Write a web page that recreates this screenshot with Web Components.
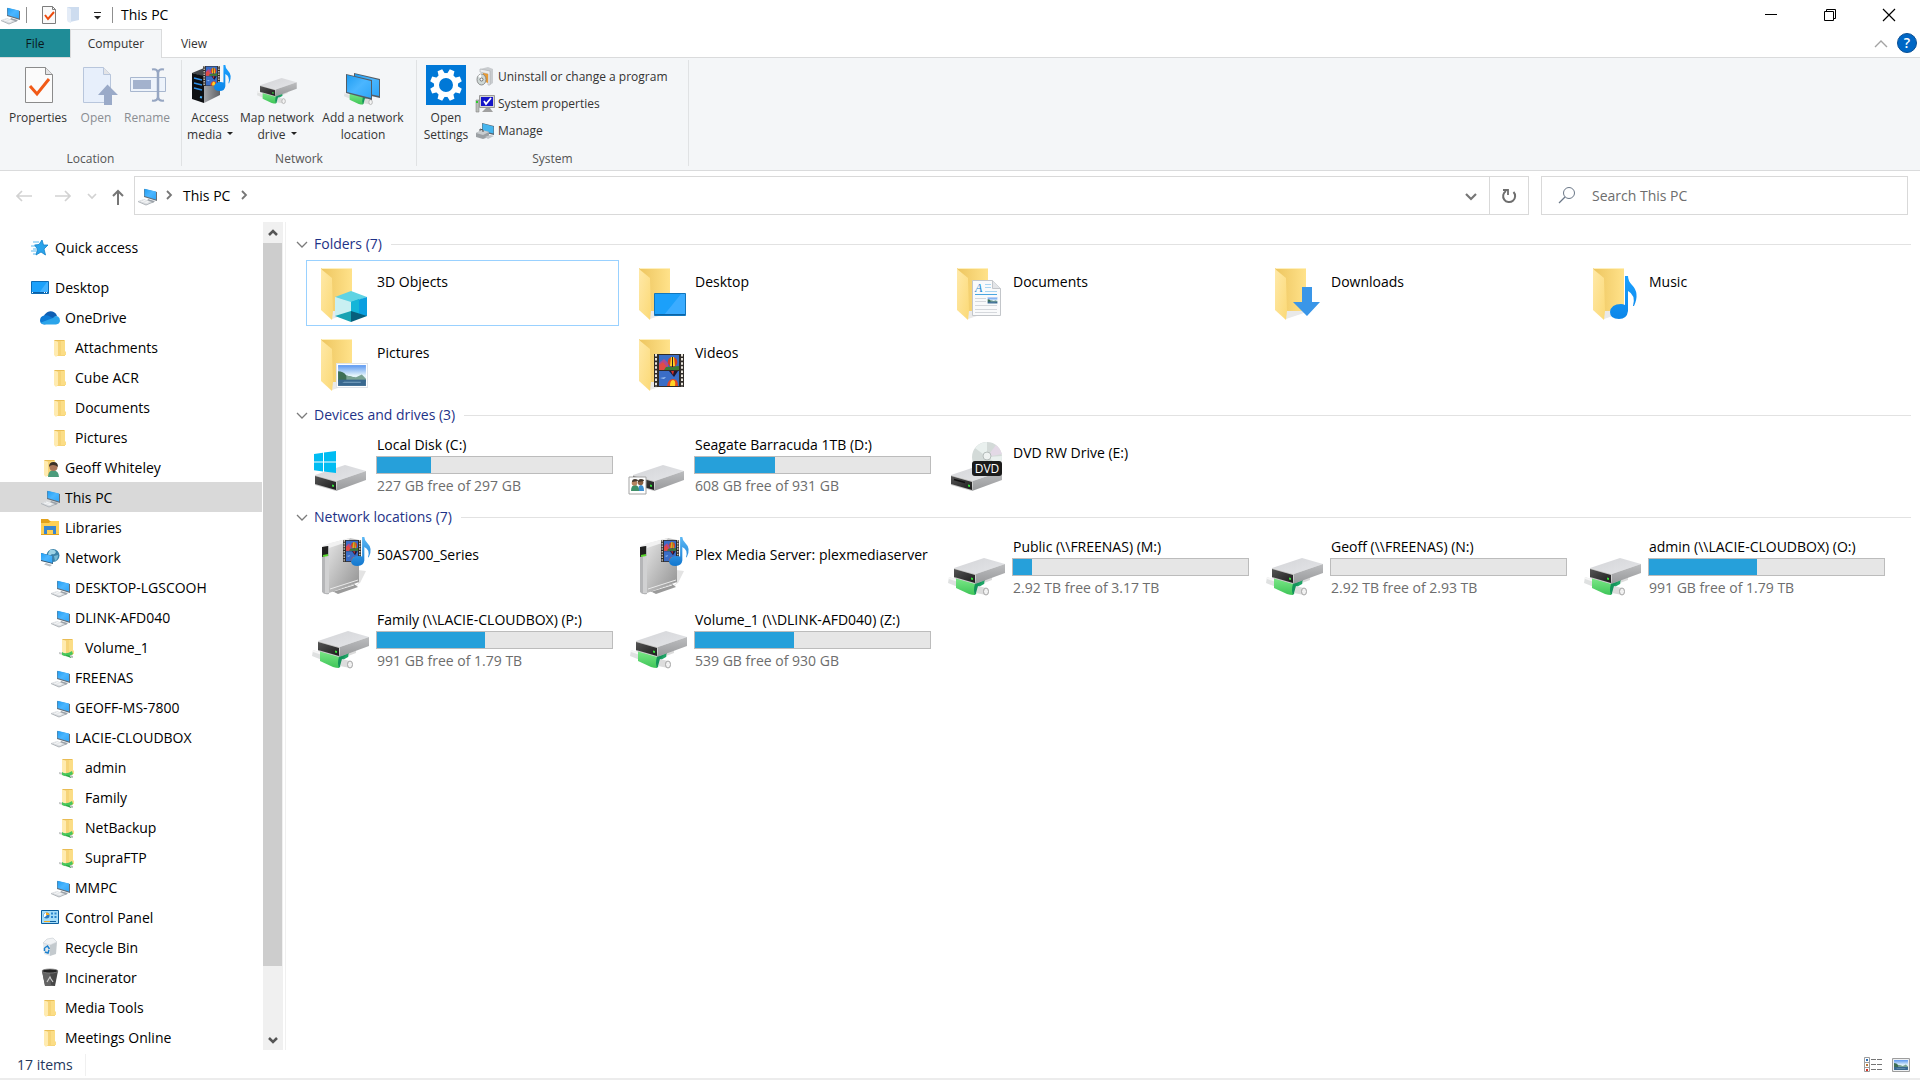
<!DOCTYPE html>
<html lang="en">
<head>
<meta charset="utf-8">
<title>This PC</title>
<style>
  html, body { height: 100%; margin: 0; }
  body {
    font: 14px/22px "Open Sans", "Noto Sans", sans-serif;
    color: #000;
    background: #fff;
    overflow: hidden;
  }
</style>
</head>
<body>
<file-explorer></file-explorer>

<script>
// ---- icon parts ----

const gradients = `
  <defs>
    <linearGradient id="fb" x1="0" x2="1"><stop offset="0" stop-color="#edc55f"/><stop offset="1" stop-color="#ffe28a"/></linearGradient>
    <linearGradient id="ff" x1="0" x2="1" y2="1"><stop offset="0" stop-color="#ffe9a8"/><stop offset="1" stop-color="#fbd976"/></linearGradient>
    <linearGradient id="top" x1="0" x2="1" y2="1"><stop offset="0" stop-color="#d4d5d8"/><stop offset="1" stop-color="#e4e5e8"/></linearGradient>
    <linearGradient id="side" x2="0" y2="1"><stop offset="0" stop-color="#bcbdbf"/><stop offset="1" stop-color="#98999b"/></linearGradient>
    <linearGradient id="dark" x2="1" y2="1"><stop offset="0" stop-color="#555"/><stop offset="1" stop-color="#1c1c1c"/></linearGradient>
    <linearGradient id="green" x2="0" y2="1"><stop offset="0" stop-color="#7be887"/><stop offset="1" stop-color="#3fc558"/></linearGradient>
    <linearGradient id="scr" x2="1" y2="1"><stop offset="0" stop-color="#1f9df2"/><stop offset=".5" stop-color="#4bb6ff"/><stop offset="1" stop-color="#2ea5f8"/></linearGradient>
    <linearGradient id="note" x2="0" y2="1"><stop offset="0" stop-color="#1aa0ff"/><stop offset="1" stop-color="#0c86e8"/></linearGradient>
    <linearGradient id="note2" x2="0" y2="1"><stop offset="0" stop-color="#5bb8f5"/><stop offset="1" stop-color="#1277cf"/></linearGradient>
    <linearGradient id="sky" x2="0" y2="1"><stop offset="0" stop-color="#5b97f0"/><stop offset=".5" stop-color="#e4f4fb"/><stop offset="1" stop-color="#cfe6f0"/></linearGradient>
    <linearGradient id="case" x2="1" y2="1"><stop offset="0" stop-color="#e6e6e6"/><stop offset="1" stop-color="#909090"/></linearGradient>
    <linearGradient id="srv" x2="1" y2="0"><stop offset="0" stop-color="#a4a6aa"/><stop offset="1" stop-color="#5f6165"/></linearGradient>
  </defs>`;

const bigFolder = `
  <path d="M18 56l21-7v-2H18z" fill="#e9e9e9"/>
  <path d="M7 5h31v43H17z" fill="url(#fb)"/>
  <path d="M7 5h31v1H8z" fill="#fff0bd"/>
  <path d="M7 6l11 9 1 33-1 9L7 47z" fill="url(#ff)"/>`;

const smallFolder = `
  <path d="M5 2h9v13h1v3H6z" fill="#f6d478"/>
  <path d="M11 2h4v11l1 1v3h-5z" fill="#fbdd86"/>
  <path d="M4 2l4 2v13l-2 2-2-2z" fill="#ffebb0"/>
  <path d="M4 2h10v1H5z" fill="#e9bd55"/>`;

// A drive box whose front face is dark with a green light.
const drive = (x, y, k = 1, slot = '') => `<g transform="translate(${x} ${y}) scale(${k})">
  <path d="M0 10L30 0l21 6-29 10z" fill="url(#top)"/>
  <path d="M22 16L51 6v9L21 26z" fill="url(#side)"/>
  <path d="M0 10l22 6-1 10-21-6z" fill="#c9c9c9"/>
  <path d="M0 11l21 6v8L0 19z" fill="url(#dark)"/>${slot}
  <path d="M17 19.500l2 .5v2l-2-.5z" fill="#35e03a"/>
</g>`;

const pipe = (x, y, k = 1) => `<g transform="translate(${x} ${y}) scale(${k})">
  <path d="M26 6l6-1 7-4-3 6-7 4z" fill="#1fa566"/>
  <path d="M38 -1l6-1v5l-8 3z" fill="#dcdcdc"/>
  <path d="M1 0l9 3v7L0 6z" fill="#dfe1e1"/>
  <path d="M1 0l9 3v2L1 2z" fill="#f6f6f6"/>
  <path d="M8 1l20 6-1 11q-3 0-6-1L8 11z" fill="url(#green)"/>
  <path d="M27 7l7-2q-5 4-4 9l-3 4q-2-5 0-11z" fill="#13935a"/>
  <path d="M30 9l8 2v7l-10-2z" fill="#dcdcdc"/>
  <ellipse cx="38" cy="14.500" rx="2.500" ry="3.500" fill="#f2f2f2" stroke="#a5a5a5"/>
</g>`;

const film = (x, y, w, h) => `<svg x="${x}" y="${y}" width="${w}" height="${h}" viewBox="0 0 30 33" preserveAspectRatio="none">
  <path d="M0 0h30v33H0z" fill="#2f2b28"/>
  <path d="M5 1h20v15H5zM5 17h20v15H5z" fill="#3a6dc6"/>
  <path d="M5 9l5-4 4 4v7H5z" fill="#b04a8e"/>
  <path d="M5 11l4-3 3 4v4H5z" fill="#e14b45"/>
  <path d="M12 13l13-1v4H10z" fill="#3c7d33"/>
  <circle cx="18.500" cy="8" r="4.800" fill="#d5401e"/><path d="M17 3h3l1 9h-5z" fill="#ffd527"/><path d="M18 3h1v10h-1z" fill="#222"/>
  <path d="M15 17h9l-4 6z" fill="#1d1630"/><path d="M17 17h3l-1 4z" fill="#d8342c"/>
  <path d="M6 24l6-1-2 2z" fill="#9ec3f2"/>
  <path d="M13 32q1-7 6-7t5 7z" fill="#e24a22"/><path d="M16 32q0-6 3-6t2 6z" fill="#ffd527"/>
  <path d="M2 0v33M28 0v33" stroke="#e9e5dc" stroke-width="2" stroke-dasharray="2.500 1.600"/>
</svg>`;

const note = (x, y, w, h, fill = 'note') => `<svg x="${x}" y="${y}" width="${w}" height="${h}" viewBox="0 0 27 43" preserveAspectRatio="none">
  <path d="M15 0h3q0 5 4 9 8 8 2 21h-1q3-11-5-15v20q-1 8-9 8-9 0-9-7 1-8 11-8 2 0 4 1z" fill="url(#${fill})"/>
</svg>`;

const landscape = (x, y, w, h) => `<svg x="${x}" y="${y}" width="${w}" height="${h}" viewBox="0 0 31 24" preserveAspectRatio="none">
  <path d="M0 0h31v24H0z" fill="#dfe3e8"/><path d="M1 1h29v22H1z" fill="#fff"/>
  <path d="M2 2h27v20H2z" fill="url(#sky)"/>
  <path d="M2 8q5 0 8 4l8 2 11 2v2H2z" fill="#3d6f55"/>
  <path d="M10 12l9 2 6-3 4 4v2H10z" fill="#7aa394"/>
  <path d="M2 16h27v6H2z" fill="#39688f"/><path d="M8 18h16v1H6z" fill="#7ea6c4"/>
</svg>`;

const people = `
  <path d="M0 0h17v17H0z" fill="#fff" stroke="#a3a3a3"/>
  <path d="M9 14q0-6 3-6t3 6z" fill="#3d8fd0"/><circle cx="11.500" cy="5.500" r="2.800" fill="#8a6043"/><path d="M9 5q0-3 3-3t3 2z" fill="#41362c"/>
  <path d="M2 14q0-6 4-6t4 6z" fill="#3f9067"/><circle cx="5.500" cy="6" r="2.800" fill="#b78460"/><path d="M3 5q0-3 3-3t3 2z" fill="#41362c"/>`;

const pc = `
  <path d="M7 3l13 3v9L7 11z" fill="#666f78"/>
  <path d="M7.500 2.800L19 5.500v8L7.500 10z" fill="url(#scr)"/>
  <path d="M11 13l3 1 4 1-2 2-6-2z" fill="#9aa1a8"/>
  <path d="M1 15l6-2 8 3-6 3z" fill="#dadde0"/>
  <path d="M1 15.500l8 3.500 6-2.500" fill="none" stroke="#b0b5ba"/>
  <path d="M4 15l7 2M6 14l6 2" stroke="#fff" stroke-width=".7"/>`;

const sheet = (fill, line) => `
  <path d="M7.500 2.500h20l7 7v28h-27z" fill="${fill}" stroke="${line}"/>
  <path d="M27.500 2.500v7h7" fill="#e4e4e6" stroke="${line}"/>`;

const netFolder = `<g transform="translate(-2 0)"><g transform="translate(0 -1)">${smallFolder}</g>
  <path d="M1 14l4 1v2l-4-1z" fill="#c6c8c8"/><path d="M4 14q4 3 10-1l1 3q-5 4-11 1z" fill="#48c65c"/>
  <path d="M8 17l6 1-1 2-5-2z" fill="#2ea748"/><path d="M12 17l3 1v2l-3-1z" fill="#b9bcbc"/></g>`;

const icons = {
  // navigation tree, 20px
  pc: [20, pc],
  folder: [20, smallFolder],
  netfolder: [20, netFolder],
  star: [20, `
    <path d="M12 2l1.500 5H18l-4 4 1.500 6-4.500-3-5 3 1.500-6-3-4 4.500-.5z" fill="#2aa3ea" stroke="#1282c9" stroke-width=".8"/>
    <path d="M3 4h6M1 8h4M3 11h4M1 13h5M3 16h3" stroke="#5db9ee"/>`],
  desktop: [20, `<path d="M1.500 3.500h17v12h-17z" fill="#1ba1fb" stroke="#0d6cb5"/><path d="M9 15L17 4h1v11z" fill="#42b2ff"/>
    <path d="M2 14.500h16" stroke="#0a5ea5"/><path d="M2 14.500h1M14 14.500h1M16 14.500h1" stroke="#fff"/>`],
  onedrive: [20, `
    <path d="M4 8q1-3 5-4.500 5-1 8 4l-5 4-9 3z" fill="#0f5fb3"/>
    <path d="M4 7.500q3-1 6 1l4 2-9 6q-5 0-5-4t4-5z" fill="#0d7ad4"/>
    <path d="M13 10q2-3 5-1.500 2 1 2 4.500-.5 3-4 3.500H5q-3 0-4-2z" fill="#2ba4ea"/>`],
  user: [20, `${smallFolder}
    <path d="M8 19q0-6 5-7 6 1 6 7z" fill="#4c9c7c"/><circle cx="13.500" cy="9" r="4" fill="#a9765a"/>
    <path d="M9 9q0-5 4.500-5T18 9q-2-2-5-2t-4 2z" fill="#3a3028"/>`],
  libraries: [20, `<path d="M1 1h7l2 2h9v14H1z" fill="#e3a11a"/><path d="M1 5l8 0 2-2h8v13H1z" fill="#ffd055"/>
    <path d="M4 8h12v8h-3v-4H7v4H4z" fill="#3a86cf"/>`],
  network: [20, `
    <circle cx="13" cy="7.500" r="6.500" fill="#3b84ab"/><path d="M10 2q5-1 6 2-1 3-4 2-3 2-2 5l-2-5z" fill="#9dd3e6"/><path d="M14 8l4-1q0 4-3 6z" fill="#76b9d4"/>
    <path d="M1 5l12 3v8L1 13z" fill="#37566e"/><path d="M1 5l11.500 3v7L1 12z" fill="url(#scr)"/>
    <path d="M6 15l6 2-2 1.500-6-2z" fill="#b9bfc4"/>`],
  control: [20, `<path d="M1.500 2.500h17v13h-17z" fill="#a4dcf8" stroke="#0c5f9f"/>
    <circle cx="6.500" cy="7.500" r="3" fill="#2878c0"/><path d="M6.500 7.500V4.500a3 3 0 0 0-2 5z" fill="#fff"/><path d="M6 4.500a3 3 0 0 1 3.500 2.500H6z" fill="#f5a81c"/>
    <path d="M11 4.500h2v2h-2zM14.500 4.500h2v2h-2zM11 8h2v2h-2zM14.500 8h2v2h-2z" fill="#2b85cc"/>
    <path d="M4 13.500h6" stroke="#f5a81c"/><path d="M10 13.500h6" stroke="#0c5f9f"/>`],
  recycle: [20, `<path d="M3 5l7 2v11l-6-2z" fill="#e3e7ea"/><path d="M10 7l7-3-1 12-6 2z" fill="#c4cace"/>
    <path d="M3 5l4-4 6-1 4 4-7 3z" fill="#f0f2f4" stroke="#c8cdd1" stroke-width=".6"/>
    <path d="M4.500 10l3-2 2 3M9 12l-1 3-3-1M4.500 13v-3" fill="none" stroke="#1b80cf" stroke-width="1.500"/>`],
  incinerator: [20, `<path d="M2 3h16l-3 15-10-.5z" fill="#474747"/><path d="M2 3l8 1 1 14H5z" fill="#636363"/>
    <ellipse cx="10" cy="3" rx="8" ry="2" fill="#222" stroke="#858585" stroke-width=".8"/>
    <path d="M7 14l3-5 1 2 2 3" fill="none" stroke="#ccc" stroke-width="1.200"/>`],
  paper: [20, `<path d="M3.500 1.500h10l3 3v14h-13z" fill="#fafafa" stroke="#7d7d7d"/><path d="M13.500 1.500v3h3" fill="none" stroke="#7d7d7d"/>
    <path d="M6 10l3 4 6-7" fill="none" stroke="#ed4a0c" stroke-width="2"/>`],
  palefolder: [20, `<path d="M4 2h12v13l-9 2z" fill="#cddcef"/><path d="M4 2l4 2v14l-3-1-1-2z" fill="#e4ecf7"/>`],

  // ribbon, 40px
  properties: [40, `${sheet('#fbfbfb', '#8b8b8b')}<path d="M12 21l7 8 12-15" fill="none" stroke="#f15a17" stroke-width="3"/>`],
  open: [40, `${sheet('#e7effb', '#b8c6dc')}<path d="M31.500 19.500L42 30h-6v10h-8V30h-6z" fill="#9aaac8"/>`],
  rename: [40, `<path d="M3.500 12.500h35v14h-35z" fill="#edf3fb" stroke="#a8b7cf"/><path d="M6 15h18v9H6z" fill="#a3b2cd"/>
    <path d="M31 6v29" stroke="#96a6c2" stroke-width="2.500"/><path d="M25 4.500q5-1 6 3 1-4 6-3M25 35.500q5 1 6-3 1 4 6 3" fill="none" stroke="#96a6c2" stroke-width="2"/>`],
  media: [40, `<path d="M2 8l12-5 16 3-15 6z" fill="#43464a"/><path d="M14 11l16-5v24l-16 8z" fill="url(#srv)"/><path d="M2 8l12 3v27L2 34z" fill="#0e1013"/>
    <path d="M4 13l8 2M4 18l8 2M4 23l8 2" stroke="#2e8fe8" stroke-width="1.500"/><path d="M10 32l2 .5" stroke="#49b4ff" stroke-width="2"/>
    ${film(13, 1, 17, 20)}${note(24, 0, 17, 26)}`],
  mapdrive: [40, `${pipe(0, 26, .7)}${drive(3, 13, .72)}`],
  addnet: [40, `${pipe(1, 27, .7)}
    <path d="M11 8l26 6v19l-26-6z" fill="#545d66"/><path d="M12 9l24 6v16l-24-5z" fill="url(#scr)"/>
    <path d="M3 9l26 6v20L3 28z" fill="#545d66"/><path d="M4 10l24 6v17L4 27z" fill="url(#scr)"/>`],
  settings: [40, `<path d="M0 0h40v40H0z" fill="#0078d7"/>
    <circle cx="20" cy="20" r="9.500" fill="none" stroke="#fff" stroke-width="5"/>
    <g fill="#fff">${[0, 45, 90, 135, 180, 225, 270, 315].map(a =>
      `<path d="M16.500 10l1-6h5l1 6z" transform="rotate(${a + 22.5} 20 20)"/>`).join('')}</g>`],
  uninstall: [20, `<path d="M5 2l8-2 5 2v14l-3 2z" fill="#c9cccf"/><path d="M5 2l10 2v14l-2 0V7L5 5z" fill="#ececee" stroke="#a9acaf" stroke-width=".6"/>
    <path d="M8 6l5 1v9l-5-2z" fill="#e79a35"/><ellipse cx="6.500" cy="12.500" rx="4.500" ry="5.500" fill="#cfd8d6" stroke="#777" stroke-width=".8"/>
    <path d="M6.500 12.500L3 9l3-2z" fill="#fff"/><circle cx="6.500" cy="12.500" r="1.500" fill="#fff" stroke="#555" stroke-width=".8"/>`],
  sysprops: [20, `<path d="M1 6h3v12H1z" fill="#b9bdb8" stroke="#888" stroke-width=".6"/><path d="M1 7h2v2H1z" fill="#2bd02b"/>
    <path d="M4.500 1.500h15v12h-15z" fill="#d5d5d0" stroke="#999"/><path d="M6 3h12v9H6z" fill="#1414c8"/><path d="M9 7l2 3 5-6" fill="none" stroke="#fff" stroke-width="1.800"/>
    <path d="M11 14h4l3 4H7z" fill="#a0a0a0"/>`],
  manage: [20, `<path d="M7 2l12 3v9L7 11z" fill="#59646e"/><path d="M7.500 2.500L18.500 5.500v7L7.500 10z" fill="#45b5ee"/>
    <path d="M1 12l6-3 7 2v5l-6 2-7-2z" fill="#9ba0a4"/><path d="M1 12l6-3 7 2-6 3z" fill="#c9cdd0"/><path d="M5 10V8l3 1v2" fill="none" stroke="#555"/><path d="M10 16l5-2 4 1-6 3z" fill="#c2c6ca"/>`],

  // tiles, 60px
  objects: [60, `${bigFolder}
    <path d="M37 28l16 6-16 6-16-6z" fill="#5fd3e3"/><path d="M21 34l16 5v15l-16-1z" fill="#c9f0f2"/><path d="M53 34l-16 5v15l16-1z" fill="#0a9fe0"/>
    <path d="M37 39l8-3v16l-8 2z" fill="#14b5d8"/><path d="M21 53l16-5v11z" fill="#17a3b3"/><path d="M53 53l-16-5v11z" fill="#075f7c"/>`],
  desk: [60, `${bigFolder}<path d="M22.500 30.500h31v22h-31z" fill="#1ba0fa" stroke="#1176bd"/><path d="M32 52L49 31h4v21z" fill="#3bacff"/><path d="M23 51h30v1H23z" fill="#0b63a5"/>`],
  docs: [60, `${bigFolder}<path d="M22.500 17.500h20l8 8v27h-28z" fill="#f9fafb" stroke="#c3c6ca"/><path d="M42.500 17.500v8h8" fill="#e3e5e8" stroke="#c3c6ca"/>
    <text x="25" y="29" font-family="Liberation Serif" font-style="italic" font-size="12" fill="#1c86cf">A</text>
    <path d="M35 21.500h6M35 24.500h6M35 28.500h12" stroke="#a9d5f1"/><path d="M25 31.500h22" stroke="#4aa6e0"/>
    <path d="M25 35.500h11M25 38.500h11M25 42.500h22M25 46.500h22M25 49.500h22" stroke="#d5d8dc"/>
    ${landscape(37, 34, 11, 7)}`],
  downloads: [60, `${bigFolder}<path d="M34 24h10v15h8L39 53 25 39h9z" fill="#3a96e8"/>`],
  music: [60, `${bigFolder}${note(24, 13, 27, 43)}`],
  pictures: [60, `${bigFolder}${landscape(22, 29, 32, 25)}`],
  videos: [60, `${bigFolder}${film(22, 20, 30, 33)}`],
  localdisk: [60, `${drive(1, 31)}<path d="M0 20l9-1.300v8.800H0zM10 18.600L22 17v10.500H10zM0 28.500h9v9l-9-1.300zM10 28.500h12V39l-12-1.500z" fill="#00bcf2"/>`],
  shareddisk: [60, `${drive(1, 31)}<g transform="translate(-3 43)">${people}</g>`],
  dvd: [60, `${drive(1, 31, 1, '<path d="M3 14.500l11 3" stroke="#111" stroke-width="1.500"/>')}
    <circle cx="37" cy="23" r="15" fill="#d3dad8"/><path d="M37 23L25 14q5-6 12-6zM37 23l15-1q0 6-3 9z" fill="#e9f0ee"/><path d="M37 23l9-12q4 3 6 9z" fill="#e3d9e6"/>
    <circle cx="37" cy="22" r="4" fill="#eef2f1" stroke="#b5bdbb"/>
    <rect x="22" y="27" width="30" height="15" rx="3" fill="#1b1b1b"/>
    <text x="37" y="39" text-anchor="middle" font-family="Open Sans" font-size="12" fill="#fff">DVD</text>`],
  server: [60, `<path d="M24 57l22-10 6-12-8-1v15z" fill="#e3e3e3"/><path d="M18 55l22-7 4 3-20 7z" fill="#9b9b9b"/><path d="M20 55l20-6" stroke="#eee"/>
    <path d="M14 8l22-6 9 2v42L15 57z" fill="url(#case)"/><path d="M8 10l8-3 20-5-3 4-18 6z" fill="#f1f1f1"/>
    <path d="M8 11l7-1v48q-5 1-7-2z" fill="#b5b6b8"/><path d="M10 20l2 0v37M14 20v37" stroke="#ececec" fill="none"/><path d="M8 11l6-1v9l-6 2z" fill="#202020"/><path d="M9 20l5-1" stroke="#57d62b" stroke-width="2"/>
    <path d="M16 53l28-9" stroke="#e9e9e9"/>
    ${film(29, 4, 18, 22)}${note(37, 1, 20, 29, 'note2')}`],
  netdrive: [60, `${pipe(-2, 41)}${drive(4, 22)}`],

  // status bar
  details: [20, `<path d="M1.500 2.500h5v14h-5z" fill="#fff" stroke="#9d9d9d"/><path d="M1 7.500h6M1 12.500h6" stroke="#9d9d9d"/>
    <path d="M3 4h2v2H3z" fill="#2a6fb7"/><path d="M3 9h2v2H3z" fill="#b77a3a"/><path d="M3 14h2v2H3z" fill="#d42d20"/>
    <path d="M8 4.500h5M14 4.500h5M8 9.500h5M14 9.500h5M8 14.500h5M14 14.500h5" stroke="#757575"/>`],
  thumbs: [20, `<path d="M1.500 3.500h17v13h-17z" fill="#fff" stroke="#9d9d9d"/>${landscape(2, 4, 16, 12)}`],

  // glyphs
  back: [20, '<path d="M18 10H3M8 5l-5 5 5 5" fill="none" stroke="#d2d2d2" stroke-width="1.700"/>'],
  forward: [20, '<path d="M2 10h15M12 5l5 5-5 5" fill="none" stroke="#d2d2d2" stroke-width="1.700"/>'],
  recent: [20, '<path d="M6 8l4 4 4-4" fill="none" stroke="#d2d2d2" stroke-width="1.700"/>'],
  up: [20, '<path d="M10 19V5M5 10l5-5 5 5" fill="none" stroke="#767676" stroke-width="2"/>'],
  right: [20, '<path d="M8 5l4 4-4 4" fill="none" stroke="#767676" stroke-width="1.800"/>'],
  down: [20, '<path d="M5 8l5 5 5-5" fill="none" stroke="#767676" stroke-width="2.200"/>'],
  refresh: [20, '<path d="M7 5a6 6 0 1 0 7.500 1" fill="none" stroke="#6e6e6e" stroke-width="2"/><path d="M4 4h5v5" fill="none" stroke="#6e6e6e" stroke-width="1.800"/>'],
  search: [20, '<circle cx="12" cy="7" r="5.500" fill="none" stroke="#6a7787"/><path d="M8 11l-6 6" stroke="#6a7787" stroke-width="1.200"/>'],
  group: [20, '<path d="M5 8l5 5 5-5" fill="none" stroke="#7b7b7b" stroke-width="1.300"/>'],
  scrollup: [20, '<path d="M6 12l4-4 4 4" fill="none" stroke="#555" stroke-width="2.500"/>'],
  scrolldown: [20, '<path d="M6 8l4 4 4-4" fill="none" stroke="#555" stroke-width="2.500"/>'],
  collapse: [20, '<path d="M4 13l6-6 6 6" fill="none" stroke="#a3a3a3" stroke-width="1.400"/>'],
  customize: [20, '<path d="M7 7.500h7" stroke="#222"/><path d="M7 11h7l-3.500 3.500z" fill="#222"/>'],
  minimize: [20, '<path d="M4 9.500h12" stroke="#000"/>'],
  restore: [20, '<path d="M4.500 6.500h9v9h-9zM6.500 6v-1.500h9v9H14" fill="none" stroke="#000"/>'],
  close: [20, '<path d="M4 4l12 12M16 4L4 16" stroke="#000" stroke-width="1.200"/>'],
};

const buttonReset = `
  button { font: inherit; color: inherit; background: none; border: 0; padding: 0; margin: 0; }
  a { color: inherit; text-decoration: none; }
`;

function define(name, render) {
  customElements.define(name, class extends HTMLElement {
    constructor() {
      super();
      this.attachShadow({ mode: 'open' });
    }

    connectedCallback() {
      this.shadowRoot.innerHTML = render(this);
    }
  });
}

define('ui-icon', (el) => {
  const [size, body] = icons[el.getAttribute('name')];
  return `
    <style>
      :host { display: block; flex: none; width: ${size}px; height: ${size}px; }
      svg { display: block; overflow: visible; }
    </style>
    <svg width="${size}" height="${size}" viewBox="0 0 ${size} ${size}" aria-hidden="true">${gradients}${body}</svg>`;
});

// ---- title bar ----

define('title-bar', () => `
  <style>
    ${buttonReset}
    :host { display: flex; align-items: center; height: 29px; }
    .sep { width: 1px; height: 16px; background: #8f8f8f; }
    .tools { display: flex; margin: 0 5px 0 12px; gap: 4px; }
    h1 { flex: 1; margin: 0 0 0 8px; font-size: 14px; font-weight: 400; }
    .win { display: flex; justify-content: center; width: 59px; }
    .win:last-child { margin-right: 2px; }
    .first { margin-right: 6px; }
  </style>
  <ui-icon class="first" name="pc"></ui-icon>
  <span class="sep"></span>
  <div class="tools">
    <button aria-label="Properties"><ui-icon name="paper"></ui-icon></button>
    <button aria-label="New folder"><ui-icon name="palefolder"></ui-icon></button>
    <button aria-label="Customize"><ui-icon name="customize"></ui-icon></button>
  </div>
  <span class="sep"></span>
  <h1>This PC</h1>
  <button class="win" aria-label="Minimize"><ui-icon name="minimize"></ui-icon></button>
  <button class="win" aria-label="Restore"><ui-icon name="restore"></ui-icon></button>
  <button class="win" aria-label="Close"><ui-icon name="close"></ui-icon></button>`);

// ---- ribbon ----

define('ribbon-tabs', () => `
  <style>
    ${buttonReset}
    :host { display: flex; align-items: stretch; height: 28px; font-size: 12px; color: #333; border-bottom: 1px solid #dadbdc; }
    button { padding-top: 1px; }
    .file { width: 70px; background: #1f8c97; color: #0a1a1c; }
    .tab { width: 92px; box-sizing: border-box; }
    .tab.on { background: #f4f6f8; border: 1px solid #dadbdc; border-bottom: 0; margin-bottom: -1px; padding: 0; }
    .view { width: 64px; }
    .right { display: flex; align-items: center; gap: 6px; margin-left: auto; padding-right: 3px; }
    .help { width: 20px; height: 20px; padding: 0; border-radius: 50%; background: #0067c5; border: 1px solid #0a4f94; color: #fff; font-size: 14px; line-height: 18px; font-weight: 600; }
  </style>
  <button class="file">File</button>
  <button class="tab on">Computer</button>
  <button class="view">View</button>
  <div class="right">
    <button aria-label="Minimize the Ribbon"><ui-icon name="collapse"></ui-icon></button>
    <button class="help">?</button>
  </div>`);

define('ribbon-group', (el) => `
  <style>
    :host { display: flex; flex-direction: column; box-sizing: border-box; height: 106px; padding: 5px 4px 0; border-right: 1px solid #e0e2e4; }
    .items { display: flex; flex: 1; }
    .label { text-align: center; line-height: 14px; color: #555; }
  </style>
  <div class="items"><slot></slot></div>
  <div class="label">${el.getAttribute('label')}</div>`);

define('ribbon-button', (el) => `
  <style>
    ${buttonReset}
    :host { display: block; text-align: center; }
    :host([disabled]) { color: #8a8d92; }
    button { display: flex; flex-direction: column; align-items: center; width: 100%; line-height: 17px; white-space: nowrap; }
    span { margin-top: 4px; }
    .menu::after { content: ""; display: inline-block; border: 3px solid transparent; border-top-color: #222; border-bottom: 0; margin: 0 0 4px 5px; }
  </style>
  <button ${el.hasAttribute('disabled') ? 'disabled' : ''}>
    <ui-icon name="${el.getAttribute('icon')}"></ui-icon>
    <span class="${el.hasAttribute('menu') ? 'menu' : ''}"><slot></slot></span>
  </button>`);

define('ribbon-row', (el) => `
  <style>
    ${buttonReset}
    :host { display: block; }
    button { display: flex; align-items: center; gap: 3px; height: 27px; white-space: nowrap; }
  </style>
  <button><ui-icon name="${el.getAttribute('icon')}"></ui-icon><slot></slot></button>`);

define('ribbon-bar', () => `
  <style>
    :host { display: flex; padding: 2px 0 4px; background: #f4f6f8; border-bottom: 1px solid #dadbdc; font-size: 12px; color: #333; }
    .w48 { width: 48px; }
    .w50 { width: 50px; }
    .w54 { width: 54px; }
    .w68 { width: 68px; }
    .w86 { width: 86px; }
    .location { width: 182px; }
    .network { width: 235px; }
    .system { width: 272px; }
    .rows { margin: -2px 0 0 4px; }
  </style>
  <ribbon-group class="location" label="Location">
    <ribbon-button class="w68" icon="properties">Properties</ribbon-button>
    <ribbon-button class="w48" icon="open" disabled>Open</ribbon-button>
    <ribbon-button class="w54" icon="rename" disabled>Rename</ribbon-button>
  </ribbon-group>
  <ribbon-group class="network" label="Network">
    <ribbon-button class="w48" icon="media" menu>Access<br>media</ribbon-button>
    <ribbon-button class="w86" icon="mapdrive" menu>Map network<br>drive</ribbon-button>
    <ribbon-button class="w86" icon="addnet">Add a network<br>location</ribbon-button>
  </ribbon-group>
  <ribbon-group class="system" label="System">
    <ribbon-button class="w50" icon="settings">Open<br>Settings</ribbon-button>
    <div class="rows">
      <ribbon-row icon="uninstall">Uninstall or change a program</ribbon-row>
      <ribbon-row icon="sysprops">System properties</ribbon-row>
      <ribbon-row icon="manage">Manage</ribbon-row>
    </div>
  </ribbon-group>`);

// ---- address bar ----

define('address-bar', () => `
  <style>
    ${buttonReset}
    :host { display: flex; padding: 5px 12px 7px 14px; }
    .nav { display: flex; align-items: center; gap: 19px; width: 120px; }
    .nav .tight { margin: 0 -13px 0 -10px; }
    .box { display: flex; align-items: center; box-sizing: border-box; height: 39px; border: 1px solid #d9d9d9; }
    .path { flex: 1; padding-left: 2px; }
    .path .device { margin-right: 2px; }
    .crumb { margin: 0 4px; }
    .drop { display: flex; justify-content: center; width: 36px; margin-left: auto; }
    .refresh { display: flex; justify-content: center; align-items: center; width: 39px; height: 37px; border-left: 1px solid #d9d9d9; }
    .search { width: 367px; margin-left: 12px; padding-left: 15px; gap: 15px; }
    input { flex: 1; min-width: 0; border: 0; outline: 0; padding: 0; font: inherit; background: none; }
    input::placeholder { color: #6d6d6d; opacity: 1; }
  </style>
  <div class="nav">
    <button aria-label="Back"><ui-icon name="back"></ui-icon></button>
    <button aria-label="Forward"><ui-icon name="forward"></ui-icon></button>
    <button class="tight" aria-label="Recent locations"><ui-icon name="recent"></ui-icon></button>
    <button aria-label="Up"><ui-icon name="up"></ui-icon></button>
  </div>
  <div class="box path">
    <ui-icon class="device" name="pc"></ui-icon>
    <ui-icon name="right"></ui-icon>
    <a class="crumb" href="#">This PC</a>
    <ui-icon name="right"></ui-icon>
    <button class="drop" aria-label="Previous locations"><ui-icon name="down"></ui-icon></button>
    <button class="refresh" aria-label="Refresh"><ui-icon name="refresh"></ui-icon></button>
  </div>
  <label class="box search">
    <ui-icon name="search"></ui-icon>
    <input type="text" placeholder="Search This PC" aria-label="Search This PC">
  </label>`);

// ---- navigation pane ----

define('nav-item', (el) => `
  <style>
    ${buttonReset}
    :host { display: block; }
    a { display: flex; align-items: center; box-sizing: border-box; gap: 5px; height: 30px; padding-top: 2px; padding-left: ${30 + 10 * Number(el.getAttribute('level'))}px; white-space: nowrap; }
    :host([selected]) a { background: #d9d9d9; }
  </style>
  <a href="#"><ui-icon name="${el.getAttribute('icon')}"></ui-icon><slot></slot></a>`);

const tree = [
  [0, 'desktop', 'Desktop'],
  [1, 'onedrive', 'OneDrive'],
  [2, 'folder', 'Attachments'],
  [2, 'folder', 'Cube ACR'],
  [2, 'folder', 'Documents'],
  [2, 'folder', 'Pictures'],
  [1, 'user', 'Geoff Whiteley'],
  [1, 'pc', 'This PC', 'selected'],
  [1, 'libraries', 'Libraries'],
  [1, 'network', 'Network'],
  [2, 'pc', 'DESKTOP-LGSCOOH'],
  [2, 'pc', 'DLINK-AFD040'],
  [3, 'netfolder', 'Volume_1'],
  [2, 'pc', 'FREENAS'],
  [2, 'pc', 'GEOFF-MS-7800'],
  [2, 'pc', 'LACIE-CLOUDBOX'],
  [3, 'netfolder', 'admin'],
  [3, 'netfolder', 'Family'],
  [3, 'netfolder', 'NetBackup'],
  [3, 'netfolder', 'SupraFTP'],
  [2, 'pc', 'MMPC'],
  [1, 'control', 'Control Panel'],
  [1, 'recycle', 'Recycle Bin'],
  [1, 'incinerator', 'Incinerator'],
  [1, 'folder', 'Media Tools'],
  [1, 'folder', 'Meetings Online'],
];

define('nav-pane', () => `
  <style>
    ${buttonReset}
    :host { display: flex; width: 285px; border-right: 1px solid #f0f0f0; overflow: hidden; }
    nav { width: 262px; margin-right: 1px; padding-top: 10px; box-sizing: border-box; overflow: hidden; }
    .quick { margin-bottom: 10px; }
    .scroll { display: flex; flex-direction: column; width: 20px; background: #f0f0f0; }
    .scroll button { height: 21px; }
    .track { flex: 1; }
    .thumb { height: 92%; width: 19px; background: #cdcdcd; }
  </style>
  <nav>
    <nav-item class="quick" level="0" icon="star">Quick access</nav-item>
    ${tree.map(([level, icon, text, state = '']) => `<nav-item level="${level}" icon="${icon}" ${state}>${text}</nav-item>`).join('')}
  </nav>
  <div class="scroll">
    <button aria-label="Scroll up"><ui-icon name="scrollup"></ui-icon></button>
    <div class="track"><div class="thumb"></div></div>
    <button aria-label="Scroll down"><ui-icon name="scrolldown"></ui-icon></button>
  </div>`);

// ---- content ----

define('tile-group', (el) => `
  <style>
    ${buttonReset}
    :host { display: block; }
    button { display: flex; align-items: center; width: 100%; height: 34px; padding-top: 2px; color: #1e3287; }
    button::after { content: ""; flex: 1; height: 1px; margin-left: 9px; background: #e2e2e2; }
    ui-icon { margin-right: 2px; }
    .grid { display: grid; grid-template-columns: repeat(auto-fill, 313px); gap: 5px; padding-left: 14px; }
  </style>
  <button><ui-icon name="group"></ui-icon>${el.getAttribute('label')}</button>
  <div class="grid"><slot></slot></div>`);

define('file-tile', (el) => {
  const used = el.getAttribute('used');
  const name = el.getAttribute('name');
  return `
    <style>
      ${buttonReset}
      :host { display: block; }
      a { display: flex; box-sizing: border-box; height: var(--tile-height, 68px); padding: 2px 5px 0 7px; border: 1px solid transparent; white-space: nowrap; }
      :host([selected]) a { border-color: #99d1ff; }
      .text { flex: 1; margin-left: 2px; padding-top: 8px; }
      .text.drive { padding-top: 0; }
      .name { padding-left: 1px; }
      .free { padding-left: 1px; line-height: 24px; color: #6d6d6d; }
      progress { display: block; width: 100%; height: 18px; box-sizing: border-box; appearance: none; border: 1px solid #bcbcbc; background: #e6e6e6; }
      progress::-webkit-progress-bar { background: #e6e6e6; }
      progress::-webkit-progress-value { background: #26a0da; }
    </style>
    <a href="#">
      <ui-icon name="${el.getAttribute('icon')}"></ui-icon>
      <div class="text ${used === null ? '' : 'drive'}">
        <div class="name">${name}</div>
        ${used === null ? '' : `<progress max="100" value="${used}" aria-label="${name}"></progress><div class="free"><slot></slot></div>`}
      </div>
    </a>`;
});

define('content-pane', () => `
  <style>
    :host { display: block; flex: 1; min-width: 0; padding: 4px 9px 0 6px; }
    .short { --tile-height: 66px; }
  </style>
  <tile-group class="short" label="Folders (7)">
    <file-tile icon="objects" name="3D Objects" selected></file-tile>
    <file-tile icon="desk" name="Desktop"></file-tile>
    <file-tile icon="docs" name="Documents"></file-tile>
    <file-tile icon="downloads" name="Downloads"></file-tile>
    <file-tile icon="music" name="Music"></file-tile>
    <file-tile icon="pictures" name="Pictures"></file-tile>
    <file-tile icon="videos" name="Videos"></file-tile>
  </tile-group>
  <tile-group label="Devices and drives (3)">
    <file-tile icon="localdisk" name="Local Disk (C:)" used="23">227 GB free of 297 GB</file-tile>
    <file-tile icon="shareddisk" name="Seagate Barracuda 1TB (D:)" used="34">608 GB free of 931 GB</file-tile>
    <file-tile icon="dvd" name="DVD RW Drive (E:)"></file-tile>
  </tile-group>
  <tile-group label="Network locations (7)">
    <file-tile icon="server" name="50AS700_Series"></file-tile>
    <file-tile icon="server" name="Plex Media Server: plexmediaserver"></file-tile>
    <file-tile icon="netdrive" name="Public (\\\\FREENAS) (M:)" used="8">2.92 TB free of 3.17 TB</file-tile>
    <file-tile icon="netdrive" name="Geoff (\\\\FREENAS) (N:)" used="0">2.92 TB free of 2.93 TB</file-tile>
    <file-tile icon="netdrive" name="admin (\\\\LACIE-CLOUDBOX) (O:)" used="46">991 GB free of 1.79 TB</file-tile>
    <file-tile icon="netdrive" name="Family (\\\\LACIE-CLOUDBOX) (P:)" used="46">991 GB free of 1.79 TB</file-tile>
    <file-tile icon="netdrive" name="Volume_1 (\\\\DLINK-AFD040) (Z:)" used="42">539 GB free of 930 GB</file-tile>
  </tile-group>`);

define('status-bar', () => `
  <style>
    ${buttonReset}
    :host { display: flex; align-items: center; box-sizing: border-box; gap: 8px; height: 30px; padding: 1px 9px 0 17px; border-bottom: 2px solid #ececec; color: #24375c; }
    .count { margin-right: auto; padding-right: 12px; border-right: 1px solid #f0f0f0; }
  </style>
  <span class="count">17 items</span>
  <button aria-label="Details"><ui-icon name="details"></ui-icon></button>
  <button aria-label="Large thumbnails"><ui-icon name="thumbs"></ui-icon></button>`);

define('file-explorer', () => `
  <style>
    :host { display: flex; flex-direction: column; height: 100vh; }
    main { display: flex; flex: 1; min-height: 0; }
  </style>
  <title-bar></title-bar>
  <ribbon-tabs></ribbon-tabs>
  <ribbon-bar></ribbon-bar>
  <address-bar></address-bar>
  <main>
    <nav-pane></nav-pane>
    <content-pane></content-pane>
  </main>
  <status-bar></status-bar>`);
</script>
</body>
</html>
